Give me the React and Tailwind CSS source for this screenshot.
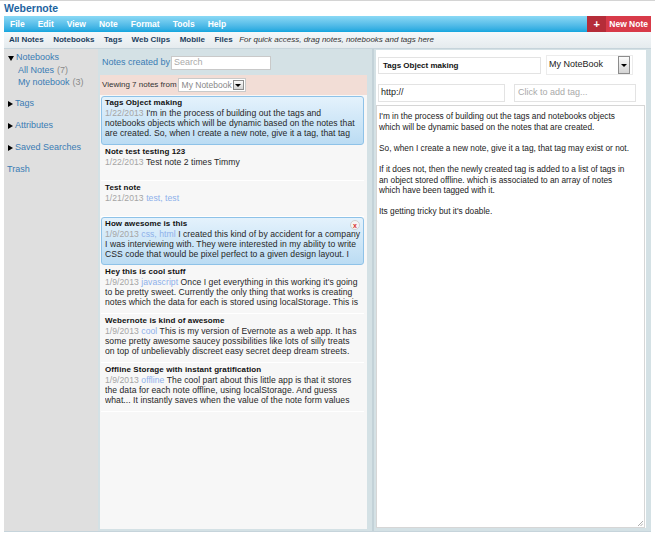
import React from 'react';

const notes = [
  {
    title: 'Tags Object making',
    date: '1/22/2013',
    lines: [
      "I'm in the process of building out the tags and",
      'notebooks objects which will be dynamic based on the notes that',
      'are created. So, when I create a new note, give it a tag, that tag',
    ],
    selected: true,
    h: 'h-[49px]',
  },
  { title: 'Note test testing 123', date: '1/22/2013', lines: ['Test note 2 times Timmy'], h: 'h-[36px]' },
  { title: 'Test note', date: '1/21/2013', tags: 'test, test', lines: [''], h: 'h-[36px]' },
  {
    title: 'How awesome is this',
    date: '1/9/2013',
    tags: 'css, html',
    lines: [
      'I created this kind of by accident for a company',
      'I was interviewing with. They were interested in my ability to write',
      'CSS code that would be pixel perfect to a given design layout. I',
    ],
    selected: true,
    close: true,
    h: 'h-[48px]',
  },
  {
    title: 'Hey this is cool stuff',
    date: '1/9/2013',
    tags: 'javascript',
    lines: [
      "Once I get everything in this working it's going",
      'to be pretty sweet. Currently the only thing that works is creating',
      'notes which the data for each is stored using localStorage. This is',
    ],
    h: 'h-[49px]',
  },
  {
    title: 'Webernote is kind of awesome',
    date: '1/9/2013',
    tags: 'cool',
    lines: [
      'This is my version of Evernote as a web app. It has',
      'some pretty awesome saucey possibilities like lots of silly treats',
      'on top of unbelievably discreet easy secret deep dream streets.',
    ],
    h: 'h-[49px]',
  },
  {
    title: 'Offline Storage with instant gratification',
    date: '1/9/2013',
    tags: 'offline',
    lines: [
      'The cool part about this little app is that it stores',
      'the data for each note offline, using localStorage. And guess',
      'what... It instantly saves when the value of the note form values',
    ],
    h: 'h-[49px]',
  },
];

const body = `I'm in the process of building out the tags and notebooks objects
which will be dynamic based on the notes that are created.

So, when I create a new note, give it a tag, that tag may exist or not.

If it does not, then the newly created tag is added to a list of tags in
an object stored offline. which is associated to an array of notes
which have been tagged with it.

Its getting tricky but it's doable.`;

function DropButton({ className }) {
  return (
    <div className={`flex items-center justify-center border border-[#8c8c8c] bg-linear-to-b from-[#fbfbfb] to-[#d4d4d4] ${className}`}>
      <div className="h-0 w-0 border-x-[3px] border-t-[3px] border-x-transparent border-t-black" />
    </div>
  );
}

function NoteItem({ note }) {
  const box = note.selected
    ? 'rounded-[3px] border border-[#8ec2e8] bg-linear-to-b from-[#e4f2fc] to-[#bbdcf3] pl-[3px] pt-[1px]'
    : 'border-b border-white pl-[4px] pt-[2px]';
  return (
    <div className={`relative overflow-hidden ${note.h} ${box}`}>
      <div className="text-[8px] font-bold leading-[10px] tracking-[0.1px] text-[#111]">{note.title}</div>
      {note.lines.map((line, i) => (
        <div key={i} className="overflow-hidden whitespace-nowrap text-[8.6px] leading-[10px] tracking-[0.05px] text-[#262626]">
          {i === 0 && <span className="text-[#a5a5a5]">{note.date} </span>}
          {i === 0 && note.tags && <span className="text-[#8db0ea]">{note.tags} </span>}
          {line}
        </div>
      ))}
      {note.close && (
        <div className="absolute right-[3px] top-[2px] flex h-[10px] w-[10px] items-center justify-center rounded-full border border-[#cfcfcf] bg-[#f4f4f4] text-[7px] font-bold leading-none text-[#d8322f]">
          x
        </div>
      )}
    </div>
  );
}

function Tri({ down }) {
  return down ? (
    <div className="h-0 w-0 border-x-[3px] border-t-[5px] border-x-transparent border-t-black" />
  ) : (
    <div className="h-0 w-0 border-y-[3px] border-l-[5px] border-y-transparent border-l-black" />
  );
}

export default function App() {
  const menu = ['File', 'Edit', 'View', 'Note', 'Format', 'Tools', 'Help'];
  const tabs = ['All Notes', 'Notebooks', 'Tags', 'Web Clips', 'Mobile', 'Files'];

  return (
    <div className="h-[538px] w-[655px] overflow-hidden border-t border-[#d4d4d4] bg-white font-['Liberation_Sans',Arial,sans-serif]">
      <div className="h-[15px] pl-[4px] text-[10.5px] font-bold leading-[15px] text-[#1d64a0]">Webernote</div>

      <div className="px-[4px]">
        {/* menu bar */}
        <div className="flex h-[16px] items-center justify-between bg-linear-to-b from-[#8ad9f5] to-[#10a6de]">
          <div className="flex gap-[13px] pl-[6px] text-[8.5px] font-bold text-white">
            {menu.map((m) => (
              <span key={m}>{m}</span>
            ))}
          </div>
          <div className="flex h-full text-white">
            <div className="flex w-[19px] items-center justify-center bg-[#b52d39] text-[11px] font-bold leading-none">+</div>
            <div className="flex items-center bg-[#d83a49] pl-[3px] pr-[3px] text-[8.5px] font-bold">New Note</div>
          </div>
        </div>

        {/* sub bar */}
        <div className="flex h-[17px] items-center gap-[9.5px] border-b border-[#c6d4db] bg-linear-to-b from-[#f5f8fa] to-[#e5ebee] pl-[5px] text-[8px]">
          {tabs.map((t) => (
            <span key={t} className="font-bold text-[#1c3f5f]">
              {t}
            </span>
          ))}
          <span className="-ml-[3px] italic text-[#333]">For quick access, drag notes, notebooks and tags here</span>
        </div>

        {/* main */}
        <div className="flex h-[483px] border-b border-[#c6d4db]">
          {/* sidebar */}
          <div className="w-[94px] shrink-0 bg-[#dfdfdf] pt-[2px] text-[9px] text-[#3a7cb4]">
            <div className="flex h-[14px] items-center pl-[4px]">
              <Tri down />
              <span className="ml-[2px]">Notebooks</span>
            </div>
            <div className="flex h-[12px] items-center pl-[14px]">
              All Notes <span className="ml-[3px] text-[#8a8a8a]">(7)</span>
            </div>
            <div className="flex h-[11px] items-center pl-[14px]">
              My notebook <span className="ml-[3px] text-[#8a8a8a]">(3)</span>
            </div>
            <div className="mt-[5px] flex h-[22px] items-center pl-[4px]">
              <Tri />
              <span className="ml-[2px]">Tags</span>
            </div>
            <div className="flex h-[22px] items-center pl-[4px]">
              <Tri />
              <span className="ml-[2px]">Attributes</span>
            </div>
            <div className="flex h-[22px] items-center pl-[4px]">
              <Tri />
              <span className="ml-[2px]">Saved Searches</span>
            </div>
            <div className="flex h-[22px] items-center pl-[3px]">Trash</div>
          </div>

          {/* note list column */}
          <div className="flex w-[274px] shrink-0 flex-col bg-[#d4e1e5] pb-[2px] pl-[2px] pr-[5px]">
            <div className="flex h-[26px] items-center pl-[2px] pt-[2px]">
              <span className="text-[9px] text-[#3a7cb4]">Notes created by</span>
              <div className="ml-[1px] flex h-[14px] w-[100px] items-center border border-[#c9c9c9] bg-white pl-[2px] text-[9px] text-[#aaa]">
                Search
              </div>
            </div>
            <div className="flex h-[20px] items-center bg-[#f2ddd6] pl-[2px]">
              <span className="text-[8px] text-[#333]">Viewing 7 notes from</span>
              <div className="ml-[1px] flex h-[14px] w-[68px] items-center justify-between border border-[#c9c9c9] bg-white pl-[3px] pr-[1px]">
                <span className="text-[8.5px] text-[#888]">My Notebook</span>
                <DropButton className="h-[10px] w-[11px]" />
              </div>
            </div>
            <div className="flex-1 bg-[#f7f7f7] pl-[1px] pr-[3px] pt-[1px]">
              {notes.map((n) => (
                <NoteItem key={n.title} note={n} />
              ))}
            </div>
          </div>

          {/* editor column */}
          <div className="flex flex-1 flex-col border-l-2 border-[#c3d2d8] bg-[#d4e1e5] pb-[3px] pl-[2px] pr-[5px] pt-[1px]">
            <div className="flex flex-1 flex-col bg-white">
              <div className="flex items-start pl-[2px] pt-[5px]">
                <div className="mt-[2px] flex h-[17px] w-[163px] items-center border border-[#e3e3e3] pl-[4px] text-[8px] font-bold text-[#111]">
                  Tags Object making
                </div>
                <div className="ml-[5px] flex h-[20px] w-[87px] items-center justify-between border border-[#ececec] pl-[2px] pr-[2px]">
                  <span className="text-[9px] text-[#222]">My NoteBook</span>
                  <DropButton className="h-[18px] w-[12px]" />
                </div>
              </div>
              <div className="mt-[9px] flex pl-[2px]">
                <div className="flex h-[18px] w-[127px] items-center border border-[#e3e3e3] pl-[2px] text-[9px] text-[#222]">http://</div>
                <div className="ml-[9px] flex h-[18px] w-[122px] items-center border border-[#e3e3e3] pl-[3px] text-[9px] text-[#aaa]">
                  Click to add tag...
                </div>
              </div>
              <div className="relative mr-[1px] mt-[3px] flex-1 border border-[#d6d6d6] pl-[2px] pt-[5px]">
                <div className="whitespace-pre text-[8.3px] leading-[10.6px] text-[#222]">{body}</div>
                <svg className="absolute bottom-[1px] right-[1px]" width="6" height="6" viewBox="0 0 6 6">
                  <path d="M1 6L6 1M3.5 6L6 3.5" stroke="#999" strokeWidth="0.8" />
                </svg>
              </div>
            </div>
          </div>
        </div>
      </div>
    </div>
  );
}
